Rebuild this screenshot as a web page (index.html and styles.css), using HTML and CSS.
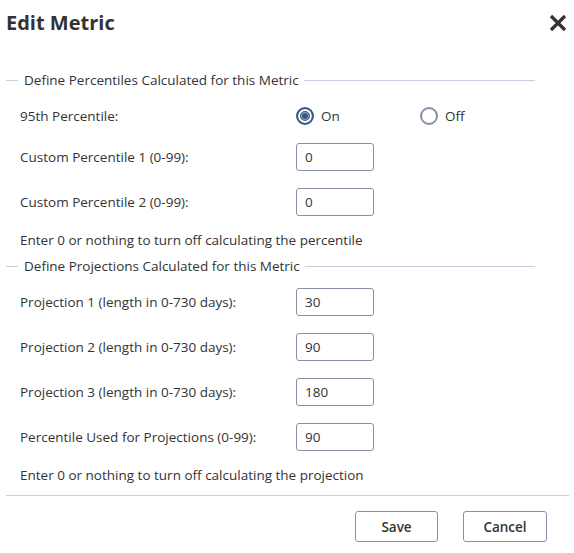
FILE: index.html
```html
<!DOCTYPE html>
<html>
<head>
<meta charset="utf-8">
<link rel="stylesheet" href="styles.css">
</head>
<body>
<div class="dialog">
  <div class="header">
    <h1 class="title">Edit Metric</h1>
    <span class="close" aria-label="Close">
      <svg width="18" height="18" viewBox="0 0 18 18"><path d="M2 2 L16 16 M16 2 L2 16" stroke="#333" stroke-width="3.2" stroke-linecap="butt"/></svg>
    </span>
  </div>

  <fieldset class="group first">
    <legend class="legend">Define Percentiles Calculated for this Metric</legend>
    <div class="row radio-row">
      <span class="label">95th Percentile:</span>
      <label class="radio"><span class="dot checked"></span>On</label>
      <label class="radio"><span class="dot"></span>Off</label>
    </div>
    <div class="row">
      <span class="label">Custom Percentile 1 (0-99):</span>
      <div class="input">0</div>
    </div>
    <div class="row">
      <span class="label">Custom Percentile 2 (0-99):</span>
      <div class="input">0</div>
    </div>
    <p class="note">Enter 0 or nothing to turn off calculating the percentile</p>
  </fieldset>

  <fieldset class="group second">
    <legend class="legend">Define Projections Calculated for this Metric</legend>
    <div class="row">
      <span class="label">Projection 1 (length in 0-730 days):</span>
      <div class="input">30</div>
    </div>
    <div class="row">
      <span class="label">Projection 2 (length in 0-730 days):</span>
      <div class="input">90</div>
    </div>
    <div class="row">
      <span class="label">Projection 3 (length in 0-730 days):</span>
      <div class="input">180</div>
    </div>
    <div class="row">
      <span class="label">Percentile Used for Projections (0-99):</span>
      <div class="input">90</div>
    </div>
    <p class="note">Enter 0 or nothing to turn off calculating the projection</p>
  </fieldset>

  <div class="footer">
    <button class="btn">Save</button>
    <button class="btn">Cancel</button>
  </div>
</div>
</body>
</html>
```

FILE: styles.css
```css
* { box-sizing: border-box; }
html, body { margin: 0; padding: 0; background: #fff; }
body {
  font-family: "Open Sans", "Noto Sans", sans-serif;
  font-size: 13.5px;
  color: #333;
  width: 574px;
}
.dialog { padding: 0 0 0 6px; }
.header {
  display: flex;
  align-items: center;
  justify-content: space-between;
  padding: 7px 7px 0 0;
  height: 38px;
}
.title {
  margin: 0;
  font-size: 20px;
  font-weight: 700;
  line-height: 28px;
  color: #333;
}
.close { display: block; width: 18px; height: 18px; }
.close svg { display: block; }

.group {
  margin: 0 39px 0 0;
  padding: 0 0 0 14px;
  border: 0;
  border-top: 1px solid #c8cde0;
  min-width: 0;
}
.group.first { margin-top: 33px; }
.group.second { margin-top: 8px; }
.legend {
  margin-left: -2px;
  padding: 0 5px 0 6px;
  font-size: 13.5px;
  line-height: 18px;
}
.row {
  display: flex;
  align-items: center;
  height: 28px;
  margin-bottom: 17px;
}
.group.first .radio-row { height: 20px; margin-top: 17px; }
.group.second .row:first-of-type { margin-top: 13px; }
.label { width: 276px; flex: none; }
.radio {
  display: flex;
  align-items: center;
  width: 124px;
  flex: none;
}
.dot {
  width: 18px;
  height: 18px;
  border-radius: 50%;
  border: 2px solid #8590a8;
  margin: 0 7px 0 0;
  background: #fff;
  flex: none;
}
.dot.checked {
  border-color: #3d5b82;
  background: #3d5b82;
  box-shadow: inset 0 0 0 2px #fff, inset 0 0 0 3px #3d5b82, inset 0 0 0 4px #8aa0bf;
}
.input {
  width: 78px;
  height: 28px;
  border: 1px solid #8991a6;
  border-radius: 3px;
  padding: 0 0 0 8px;
  line-height: 26px;
  color: #333;
}
.note {
  margin: -2px 0 0 0;
  line-height: 18px;
}
.footer {
  margin-top: 11px;
  margin-right: 5px;
  border-top: 1px solid #c8cde0;
  padding: 15px 22px 0 0;
  display: flex;
  justify-content: flex-end;
  gap: 25px;
}
.btn {
  font-family: "Open Sans", "Noto Sans", sans-serif;
  font-size: 13.5px;
  font-weight: 600;
  color: #333;
  background: #fff;
  border: 1px solid #8991a6;
  border-radius: 3px;
  height: 31px;
  width: 83px;
  padding: 0;
}
.btn + .btn { width: 84px; }
```
